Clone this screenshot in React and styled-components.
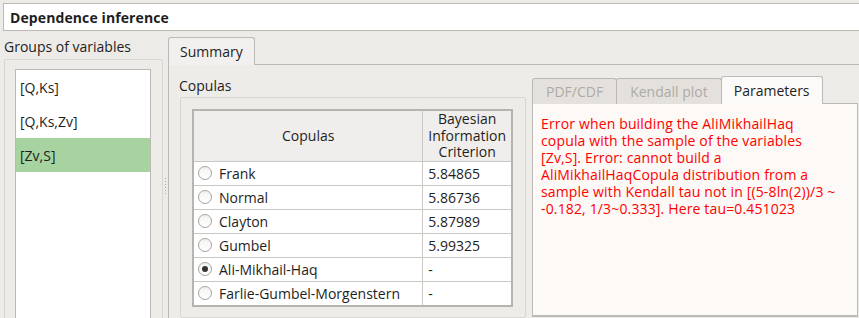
import React from "react"
import styled, { createGlobalStyle } from "styled-components"

const GlobalStyle = createGlobalStyle`
  html, body {
    margin: 0;
    padding: 0;
    background: #edebe8;
    overflow: hidden;
  }
  body {
    width: 859px;
    height: 318px;
    font-family: "Open Sans", "DejaVu Sans", sans-serif;
    font-size: 14px;
    color: #1e1e1e;
  }
`

const Window = styled.div`
  width: 859px;
  height: 318px;
  display: flex;
  flex-direction: column;
  overflow: hidden;
`

const TitleField = styled.div`
  margin: 3px 0 0 3px;
  height: 26px;
  background: #ffffff;
  border: 1px solid #bdb9b5;
  border-right: none;
  display: flex;
  align-items: center;
  padding-left: 6px;
  font-weight: 700;
  font-size: 14px;
  letter-spacing: 0.1px;
`

const Body = styled.div`
  flex: 1;
  display: flex;
  min-height: 0;
`

const LeftPanel = styled.div`
  width: 159px;
  margin-left: 4px;
  display: flex;
  flex-direction: column;
`

const PanelLabel = styled.div`
  margin-top: 7px;
  height: 17px;
  line-height: 17px;
  margin-bottom: 4px;
  white-space: nowrap;
`

const GroupFrame = styled.div`
  flex: 1;
  border: 1px solid #d9d5d0;
  border-bottom: none;
  border-radius: 2px 2px 0 0;
  padding: 9px 11px 0 10px;
  display: flex;
`

const ListBox = styled.div`
  flex: 1;
  background: #ffffff;
  border: 1px solid #bdb9b5;
  border-bottom: none;
`

const ListItem = styled.div`
  height: 34px;
  display: flex;
  align-items: center;
  padding-left: 4px;
  background: ${({ $selected }) => ($selected ? "#a7d3a0" : "transparent")};
`

const Splitter = styled.div`
  width: 5px;
  display: flex;
  justify-content: center;
  padding-top: 147px;
`

const Dots = styled.div`
  width: 1px;
  height: 16px;
  background: repeating-linear-gradient(
    to bottom,
    #a9a5a0 0 1px,
    transparent 1px 3px
  );
`

const TabWidget = styled.div`
  flex: 1;
  display: flex;
  flex-direction: column;
  min-width: 0;
`

const TabBar = styled.div`
  display: flex;
  align-items: flex-end;
  height: ${({ $h }) => $h}px;
  flex-shrink: 0;
`

const Tab = styled.div`
  height: ${({ $active }) => ($active ? 27 : 25)}px;
  padding: 0 ${({ $pad }) => $pad}px;
  display: flex;
  align-items: center;
  border: 1px solid #bdb9b5;
  border-bottom: none;
  border-radius: 3px 3px 0 0;
  margin-left: ${({ $first }) => ($first ? 0 : -1)}px;
  background: ${({ $active, $light }) =>
    $active ? ($light ? "#fcfaf8" : "#f2f0ee") : "#e4e1dd"};
  color: ${({ $active }) => ($active ? "#1e1e1e" : "#aeaaa6")};
  margin-bottom: -1px;
  position: relative;
  z-index: ${({ $active }) => ($active ? 1 : 0)};
  white-space: nowrap;
`

const Pane = styled.div`
  flex: 1;
  border: 1px solid #bdb9b5;
  border-right: none;
  border-bottom: none;
  background: #eeece9;
  display: flex;
  padding: 12px 0 0 10px;
  gap: 6px;
  min-height: 0;
`

const CopulaColumn = styled.div`
  width: 347px;
  display: flex;
  flex-direction: column;
`

const SectionLabel = styled.div`
  height: 17px;
  line-height: 17px;
  margin-bottom: 3px;
`

const Frame = styled.div`
  flex: 1;
  margin-left: 1px;
  border: 1px solid #d9d5d0;
  border-radius: 2px;
  padding: 11px 12px 0 11px;
`

const Table = styled.table`
  border-collapse: collapse;
  width: 321px;
  border: 2px solid #b7b3af;
  background: #ffffff;
  font-size: 14px;
`

const HeadCell = styled.th`
  font-weight: 400;
  background: #f0eeec;
  border: 1px solid #cbc8c4;
  height: 49px;
  padding: 0;
  line-height: 16.5px;
  white-space: pre-line;
  width: ${({ $w }) => $w}px;
`

const Cell = styled.td`
  border: 1px solid #cbc8c4;
  height: 23px;
  padding: 0 5px;
  white-space: nowrap;
`

const CellInner = styled.div`
  display: flex;
  align-items: center;
  gap: 7px;
  margin-left: -1px;
`

const Radio = styled.span`
  width: 12px;
  height: 12px;
  border-radius: 50%;
  border: 1px solid #a7a39f;
  background: linear-gradient(#f3f2f1, #ffffff);
  display: inline-flex;
  align-items: center;
  justify-content: center;
  flex-shrink: 0;
  &::after {
    content: "";
    width: 6px;
    height: 6px;
    border-radius: 50%;
    background: ${({ $checked }) => ($checked ? "#333333" : "transparent")};
  }
`

const DetailColumn = styled.div`
  width: 326px;
  display: flex;
  flex-direction: column;
  margin-top: -1px;
`

const DetailPane = styled.div`
  flex: 1;
  background: #fcf9f6;
  border: 1px solid #bdb9b5;
  border-bottom: 2px solid #bdb9b5;
  padding: 11px 7px 0 8px;
  margin-bottom: 1px;
`

const ErrorText = styled.div`
  color: #ff0000;
  line-height: 17px;
  font-size: 14px;
  letter-spacing: 0.15px;
  white-space: pre-line;
`

const groups = ["[Q,Ks]", "[Q,Ks,Zv]", "[Zv,S]"]

const copulas = [
  { name: "Frank", bic: "5.84865" },
  { name: "Normal", bic: "5.86736" },
  { name: "Clayton", bic: "5.87989" },
  { name: "Gumbel", bic: "5.99325" },
  { name: "Ali-Mikhail-Haq", bic: "-", checked: true },
  { name: "Farlie-Gumbel-Morgenstern", bic: "-" },
]

const errorMessage = [
  "Error when building the AliMikhailHaq",
  "copula with the sample of the variables",
  "[Zv,S]. Error: cannot build a",
  "AliMikhailHaqCopula distribution from a",
  "sample with Kendall tau not in [(5-8ln(2))/3 ~",
  "-0.182, 1/3~0.333]. Here tau=0.451023",
].join("\n")

const App = () => {
  return (
    <>
      <GlobalStyle />
      <Window>
        <TitleField>Dependence inference</TitleField>
        <Body>
          <LeftPanel>
            <PanelLabel>Groups of variables</PanelLabel>
            <GroupFrame>
              <ListBox>
                {groups.map((g, i) => (
                  <ListItem key={g} $selected={i === 2}>
                    {g}
                  </ListItem>
                ))}
              </ListBox>
            </GroupFrame>
          </LeftPanel>
          <Splitter>
            <Dots />
          </Splitter>
          <TabWidget>
            <TabBar $h={33}>
              <Tab $active $first $pad={11}>
                Summary
              </Tab>
            </TabBar>
            <Pane>
              <CopulaColumn>
                <SectionLabel>Copulas</SectionLabel>
                <Frame>
                  <Table>
                    <thead>
                      <tr>
                        <HeadCell $w={229}>Copulas</HeadCell>
                        <HeadCell $w={88}>
                          {"Bayesian\nInformation\nCriterion"}
                        </HeadCell>
                      </tr>
                    </thead>
                    <tbody>
                      {copulas.map((c) => (
                        <tr key={c.name}>
                          <Cell>
                            <CellInner>
                              <Radio $checked={c.checked} />
                              {c.name}
                            </CellInner>
                          </Cell>
                          <Cell>{c.bic}</Cell>
                        </tr>
                      ))}
                    </tbody>
                  </Table>
                </Frame>
              </CopulaColumn>
              <DetailColumn>
                <TabBar $h={27}>
                  <Tab $first $pad={13}>PDF/CDF</Tab>
                  <Tab $pad={13}>Kendall plot</Tab>
                  <Tab $active $light $pad={12}>
                    Parameters
                  </Tab>
                </TabBar>
                <DetailPane>
                  <ErrorText>{errorMessage}</ErrorText>
                </DetailPane>
              </DetailColumn>
            </Pane>
          </TabWidget>
        </Body>
      </Window>
    </>
  )
}

export default App
